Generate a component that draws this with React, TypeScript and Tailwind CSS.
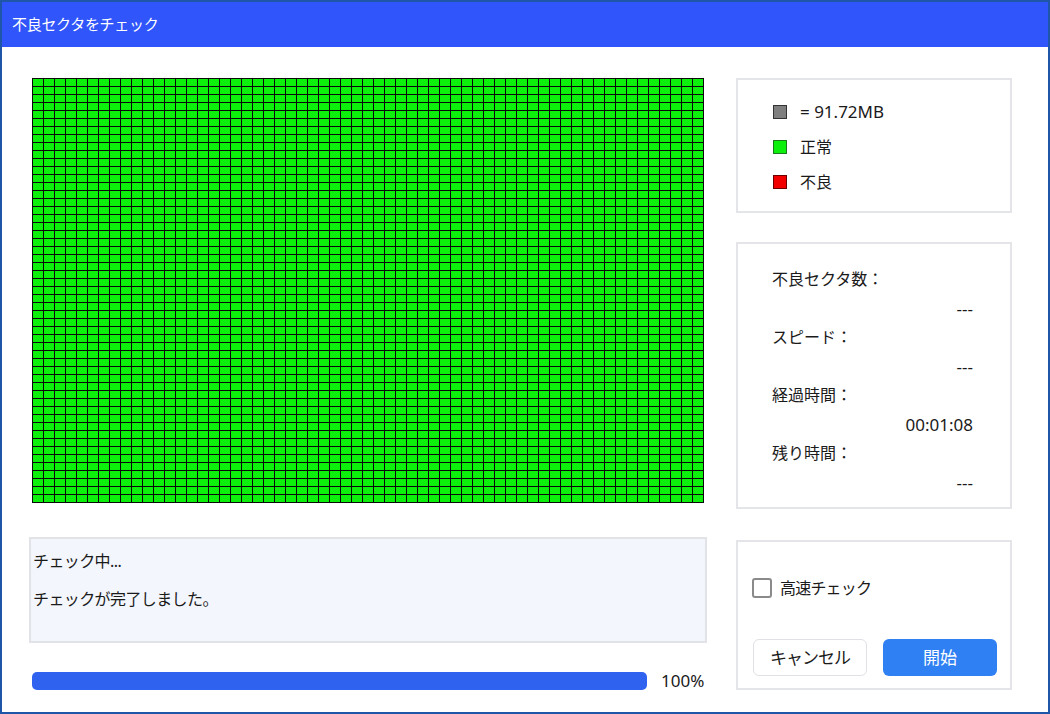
import React from "react";

const COLS = 61;
const ROWS = 53;

function Grid() {
  const cells = [];
  for (let i = 0; i < COLS * ROWS; i++) {
    cells.push(<div key={i} className="bg-[#0cf00c]" />);
  }
  return (
    <div className="ml-[3px] w-[672px] h-[425px] bg-[#0a0a0a] p-px grid grid-cols-[repeat(61,10px)] grid-rows-[repeat(53,7px)] gap-px">
      {cells}
    </div>
  );
}

function Legend({ fill, border, label, num }: { fill: string; border: string; label: string; num?: boolean }) {
  return (
    <div className="flex items-center h-[35px]">
      <div className={`w-[14px] h-[14px] border ${fill} ${border}`} />
      <span className={num ? "ml-[13px] text-[17px]" : "ml-[13px]"}>{label}</span>
    </div>
  );
}

function Stat({ label, value }: { label: string; value: string }) {
  return (
    <>
      <div className="leading-[29px] h-[29px]">{label}</div>
      <div className="leading-[29px] h-[29px] text-right text-[17px]">{value}</div>
    </>
  );
}

export default function App() {
  return (
    <div
      className="w-[1050px] h-[714px] border-2 border-[#1f56a8] bg-white flex flex-col text-[16px] text-[#1a1a1a]"
      style={{ fontFamily: "'Noto Sans', 'Noto Sans CJK JP', sans-serif" }}
    >
      <div className="h-[45px] bg-[#2f55fb] text-white flex items-center pl-[10px] text-[15px] tracking-[-0.3px]">
        不良セクタをチェック
      </div>
      <div className="flex pl-[27px] pt-[31px]">
        <div className="w-[678px] flex flex-col">
          <Grid />
          <div className="mt-[34px] h-[106px] bg-[#f3f6fc] border-2 border-[#e1e3e6] pl-[2px] pt-[3px] tracking-[-0.6px]">
            <div className="leading-[38px] h-[38px]">チェック中...</div>
            <div className="leading-[38px] h-[38px]">チェックが完了しました。</div>
          </div>
          <div className="mt-[29px] flex items-center h-[18px]">
            <div className="ml-[3px] w-[615px] h-[18px] rounded-[5px] bg-[#2f63ef]" />
            <span className="ml-[14px] text-[17px]">100%</span>
          </div>
        </div>
        <div className="ml-[29px] w-[276px] flex flex-col">
          <div className="h-[135px] border-2 border-[#e3e5e8] pl-[35px] pt-[14px]">
            <Legend fill="bg-[#7f7f7f]" border="border-[#333333]" label="= 91.72MB" num />
            <Legend fill="bg-[#0cf00c]" border="border-[#1c7a1c]" label="正常" />
            <Legend fill="bg-[#f20000]" border="border-[#6a0000]" label="不良" />
          </div>
          <div className="mt-[29px] h-[267px] border-2 border-[#e3e5e8] pl-[34px] pr-[37px] pt-[21px]">
            <Stat label="不良セクタ数：" value="---" />
            <Stat label="スピード：" value="---" />
            <Stat label="経過時間：" value="00:01:08" />
            <Stat label="残り時間：" value="---" />
          </div>
          <div className="mt-[31px] h-[150px] border-2 border-[#e3e5e8] flex flex-col pl-[14px]">
            <div className="mt-[36px] flex items-center h-[20px]">
              <div className="w-[20px] h-[20px] rounded-[3px] border-2 border-[#8a8a8a] bg-white" />
              <span className="ml-[8px] tracking-[-0.8px]">高速チェック</span>
            </div>
            <div className="mt-[41px] flex">
              <button className="ml-[1px] w-[114px] h-[37px] rounded-[6px] border border-[#dfe1e4] bg-white text-[#1a1a1a] text-[17px] tracking-[-1px]">
                キャンセル
              </button>
              <button className="ml-[16px] w-[114px] h-[37px] rounded-[6px] bg-[#2f80f3] text-white text-[17px]">
                開始
              </button>
            </div>
          </div>
        </div>
      </div>
    </div>
  );
}
